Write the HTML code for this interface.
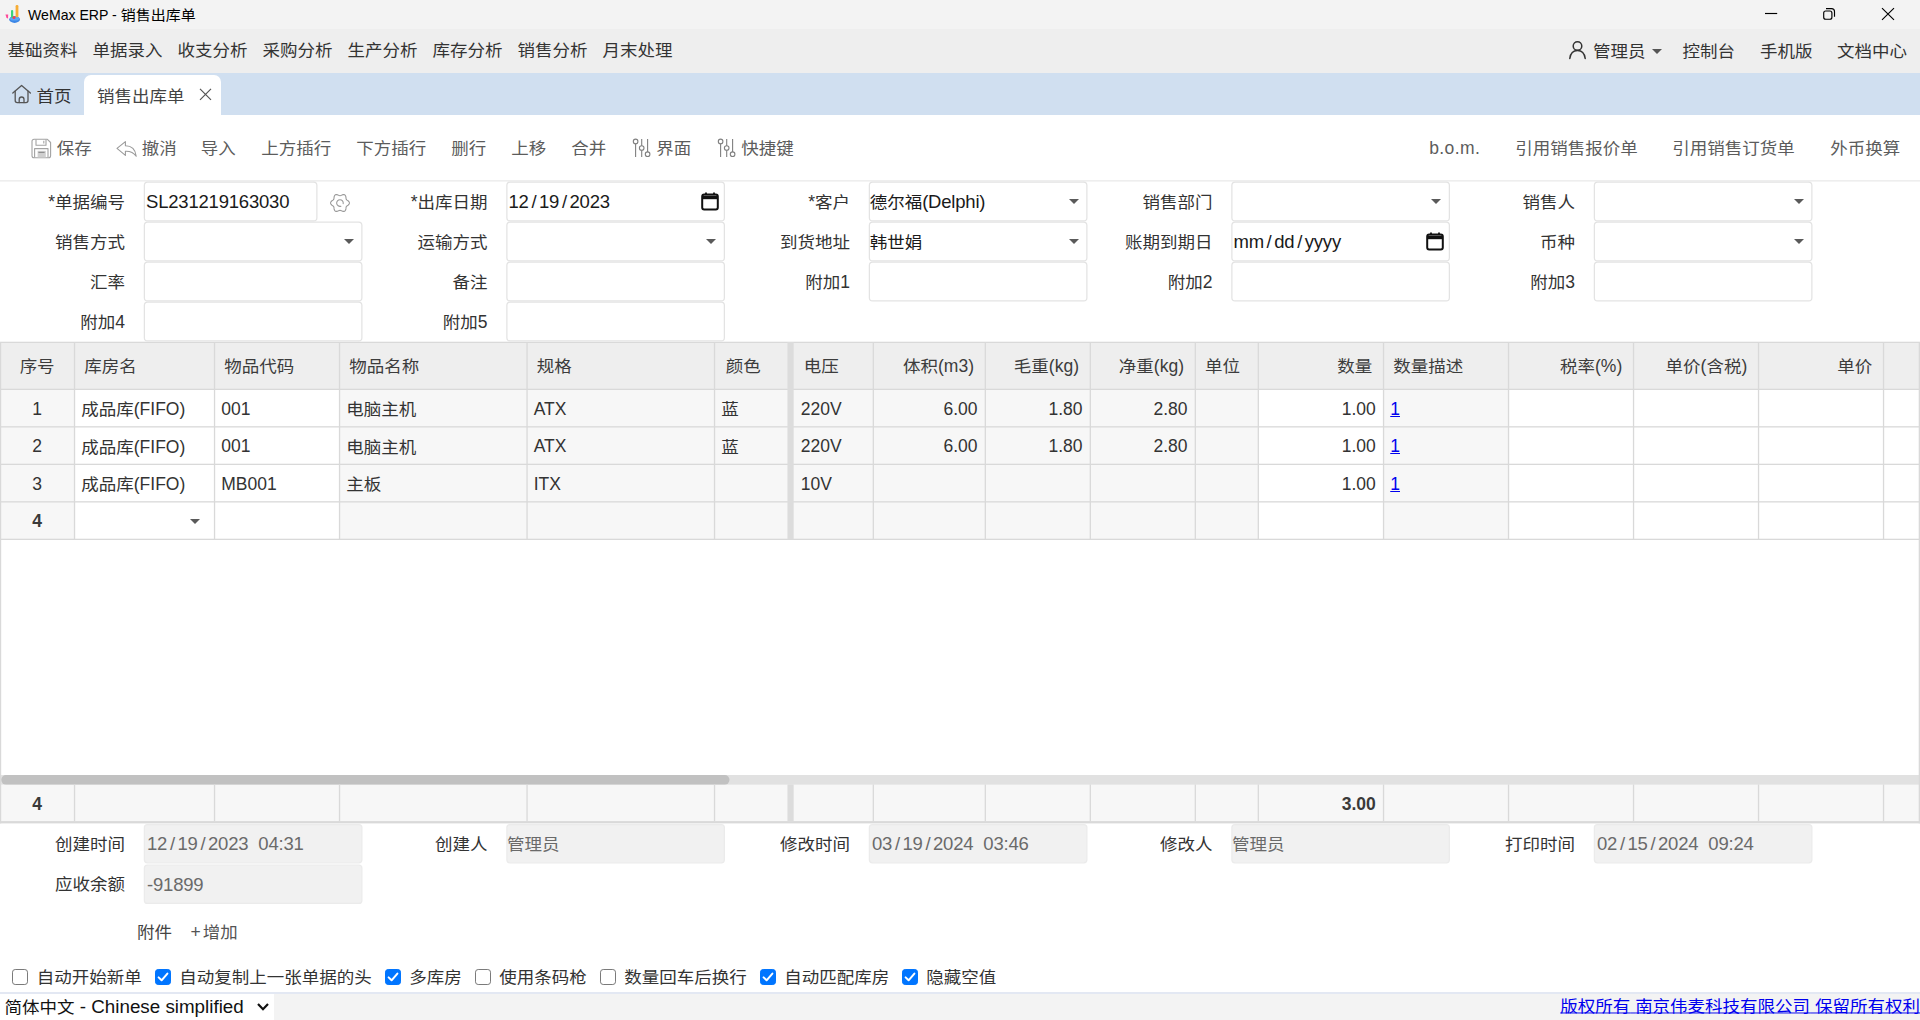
<!DOCTYPE html><html lang="zh-CN"><head><meta charset="utf-8"><title>WeMax ERP - 销售出库单</title><style>
*{box-sizing:border-box;margin:0;padding:0}
html,body{width:1920px;height:1020px;overflow:hidden;background:#fff}
body{position:relative;font-family:"Liberation Sans","Noto Sans CJK SC",sans-serif;font-size:17.5px;color:#333}
.a{position:absolute;white-space:nowrap}
.t{position:absolute;white-space:nowrap;height:24px;line-height:24px}
.k{display:inline-block;transform:scaleY(.93)}
.r{text-align:right}
.c{text-align:center}
#titlebar{left:0;top:0;width:1920px;height:29px;background:#f3f3f3}
#menubar{left:0;top:29px;width:1920px;height:44px;background:#eeeeee}
#tabbar{left:0;top:73px;width:1920px;height:42px;background:#d0dff0}
#tab{left:84px;top:75px;width:137px;height:40px;background:#fff;border-radius:7px 7px 0 0}
.title{font-size:15px;color:#000}
.tb{color:#5c5c5c}
.lbl{color:#333}
.inp{position:absolute;height:40px;font-size:18.5px;letter-spacing:-0.2px;line-height:40px;color:#1a1a1a;white-space:nowrap}
.cj{font-size:17.5px;letter-spacing:0;position:relative;top:0.5px}
.sl{padding:0 2.7px}
.sp{padding-left:5px}
.inp.dis{color:#6a6a6a}
.caret{position:absolute;width:0;height:0;border-left:5.5px solid transparent;border-right:5.5px solid transparent;border-top:5.6px solid #5a5a5a}
.cell{position:absolute;white-space:nowrap;height:24px;line-height:24px;font-size:17.5px;color:#333}
.hd{position:absolute;white-space:nowrap;height:24px;line-height:24px;font-size:17.5px;color:#3c3c3c}
.cb{position:absolute;width:16px;height:16px;border:1.4px solid #7a7a7a;border-radius:3.2px;background:#fff}
.cb.on{background:#0075ff;border-color:#0075ff}
a{color:#0000ee}
a.sq{display:inline-block;transform:scaleY(.93)}
a.sq .k{display:inline;transform:none}
</style></head><body>
<div class="a" id="titlebar"></div>
<svg class="a" style="left:4px;top:3px" width="18" height="21" viewBox="0 0 18 21">
<ellipse cx="10.6" cy="16.4" rx="5.4" ry="3.5" fill="#3c86e6"/>
<ellipse cx="10.6" cy="15.4" rx="4.6" ry="2.2" fill="#5aa6f6"/>
<rect x="11.6" y="2" width="2.8" height="12.2" rx="1.2" fill="#f7ad35"/>
<rect x="7" y="7" width="2.2" height="8" rx="1" fill="#3ad47a"/>
<path d="M1.5 11.4 L4.2 11.6 L4 15.8 L2.4 14.6 Z" fill="#ff4a9a"/>
<circle cx="10" cy="14.6" r="1.5" fill="#e8455c"/>
</svg>
<div class="t title" style="left:28px;top:2.5999999999999996px;"><span style="font-size:14.1px">WeMax ERP - </span><span style="position:relative;top:0.6px"><span class="k">销售出库单</span></span></div>
<svg class="a" style="left:1760px;top:0" width="160" height="29" viewBox="0 0 160 29" fill="none" stroke="#000" stroke-width="1.15">
<path d="M5 13.5 H17.2"/>
<rect x="63.7" y="11" width="8.2" height="8.2" rx="2"/>
<path d="M66 8.6 H71.5 a3 3 0 0 1 3 3 V16.8"/>
<path d="M122 8.2 L134 19.8 M134 8.2 L122 19.8"/>
</svg>
<div class="a" id="menubar"></div>
<div class="t " style="left:7.4px;top:38.35px;"><span class="k">基础资料</span></div>
<div class="t " style="left:92.4px;top:38.35px;"><span class="k">单据录入</span></div>
<div class="t " style="left:177.4px;top:38.35px;"><span class="k">收支分析</span></div>
<div class="t " style="left:262.4px;top:38.35px;"><span class="k">采购分析</span></div>
<div class="t " style="left:347.4px;top:38.35px;"><span class="k">生产分析</span></div>
<div class="t " style="left:432.4px;top:38.35px;"><span class="k">库存分析</span></div>
<div class="t " style="left:517.4px;top:38.35px;"><span class="k">销售分析</span></div>
<div class="t " style="left:602.4px;top:38.35px;"><span class="k">月末处理</span></div>
<svg class="a" style="left:1567px;top:39px" width="21" height="22" viewBox="0 0 21 22" fill="none" stroke="#333" stroke-width="1.5" stroke-linecap="round">
<circle cx="10.5" cy="7" r="4.3"/>
<path d="M2.8 19.5 C3.5 14.5 6.5 11.6 10.5 11.6 C14.5 11.6 17.5 14.5 18.2 19.5"/>
</svg>
<div class="t " style="left:1593px;top:38.6px;"><span class="k">管理员</span></div>
<div class="caret" style="left:1652px;top:49px;border-top-color:#555"></div>
<div class="t " style="left:1682.5px;top:38.6px;"><span class="k">控制台</span></div>
<div class="t " style="left:1760px;top:38.6px;"><span class="k">手机版</span></div>
<div class="t " style="left:1837px;top:38.6px;"><span class="k">文档中心</span></div>
<div class="a" id="tabbar"></div>
<div class="a" id="tab"></div>
<svg class="a" style="left:11px;top:83px" width="22" height="22" viewBox="0 0 22 22" fill="none" stroke="#555" stroke-width="1.3" stroke-linejoin="round" stroke-linecap="round">
<path d="M1.8 10 L10.6 2.4 L19.4 10"/>
<path d="M4.2 8.2 V17.6 a2 2 0 0 0 2 2 H15 a2 2 0 0 0 2 -2 V8.2"/>
<path d="M8.2 19.6 V16.4 a2.4 2.4 0 0 1 4.8 0 V19.6"/>
</svg>
<div class="t " style="left:36.5px;top:83.5px;"><span class="k">首页</span></div>
<div class="t " style="left:97px;top:83.5px;color:#444"><span class="k">销售出库单</span></div>
<svg class="a" style="left:198px;top:87px" width="15" height="15" viewBox="0 0 15 15" stroke="#555" stroke-width="1.2" fill="none"><path d="M2 1.8 L13 12.8 M13 1.8 L2 12.8"/></svg>
<svg class="a" style="left:31px;top:138.4px" width="21" height="21" viewBox="0 0 21 21" fill="none" stroke="#a3a3a3" stroke-width="1.1" stroke-linejoin="round">
<path d="M3 1.3 H16.4 L19.6 4.5 V17.8 a2 2 0 0 1 -2 2 H3 a2 2 0 0 1 -2 -2 V3.3 a2 2 0 0 1 2 -2 Z"/>
<path d="M5 1.5 V7.2 H15 V1.5"/>
<path d="M12.8 2.8 V5.6"/>
<path d="M3.6 19.6 V10.6 H17 V19.6"/>
<rect x="6.6" y="12.8" width="8.2" height="6.6" fill="#cfcfcf" stroke="none"/>
<path d="M7.4 14.4 H13.6" stroke="#8c8c8c"/>
</svg>
<div class="t tb" style="left:56.7px;top:135.65px;"><span class="k">保存</span></div>
<svg class="a" style="left:115px;top:138px" width="23" height="21" viewBox="0 0 23 21" fill="none" stroke="#9a9a9a" stroke-width="1.1" stroke-linejoin="round">
<path d="M2 10.4 L10.4 3.6 V7.8 C16.4 7.8 20.4 11.4 21.2 18.2 C18.6 14.4 15.2 13 10.4 13.2 V17.4 Z"/>
</svg>
<div class="t tb" style="left:141.7px;top:135.65px;"><span class="k">撤消</span></div>
<div class="t tb" style="left:200.7px;top:135.65px;"><span class="k">导入</span></div>
<div class="t tb" style="left:261.2px;top:135.65px;"><span class="k">上方插行</span></div>
<div class="t tb" style="left:356.2px;top:135.65px;"><span class="k">下方插行</span></div>
<div class="t tb" style="left:451.2px;top:135.65px;"><span class="k">删行</span></div>
<div class="t tb" style="left:511.2px;top:135.65px;"><span class="k">上移</span></div>
<div class="t tb" style="left:571.2px;top:135.65px;"><span class="k">合并</span></div>
<svg class="a" style="left:632px;top:137px" width="20" height="22" viewBox="0 0 20 22" fill="#fff" stroke="#808080" stroke-width="1.1">
<path d="M3.6 2 V20 M9.7 2 V20 M15.6 2 V20"/>
<circle cx="3.6" cy="4.4" r="2.3"/><circle cx="9.7" cy="11" r="2.3"/><circle cx="15.6" cy="17.2" r="2.3"/>
</svg>
<div class="t tb" style="left:656.2px;top:135.65px;"><span class="k">界面</span></div>
<svg class="a" style="left:717px;top:137px" width="20" height="22" viewBox="0 0 20 22" fill="#fff" stroke="#808080" stroke-width="1.1">
<path d="M3.6 2 V20 M9.7 2 V20 M15.6 2 V20"/>
<circle cx="3.6" cy="4.4" r="2.3"/><circle cx="9.7" cy="11" r="2.3"/><circle cx="15.6" cy="17.2" r="2.3"/>
</svg>
<div class="t tb" style="left:741.2px;top:135.65px;"><span class="k">快捷键</span></div>
<div class="t tb" style="left:1429.2px;top:135.65px;letter-spacing:0.4px">b.o.m.</div>
<div class="t tb" style="left:1515.2px;top:135.65px;"><span class="k">引用销售报价单</span></div>
<div class="t tb" style="left:1672.2px;top:135.65px;"><span class="k">引用销售订货单</span></div>
<div class="t tb" style="left:1830.2px;top:135.65px;"><span class="k">外币换算</span></div>
<svg class="a" style="left:0;top:0" width="1920" height="1020" viewBox="0 0 1920 1020" shape-rendering="geometricPrecision">
<rect x="0" y="342.0" width="1920" height="47.5" fill="#eeeeee"/>
<rect x="0" y="389.5" width="74.25" height="150.0" fill="#f7f7f7"/>
<rect x="339.25" y="389.5" width="187.5" height="150.0" fill="#f7f7f7"/>
<rect x="526.75" y="389.5" width="187.5" height="150.0" fill="#f7f7f7"/>
<rect x="714.25" y="389.5" width="75.0" height="150.0" fill="#f7f7f7"/>
<rect x="789.25" y="389.5" width="83.75" height="150.0" fill="#f7f7f7"/>
<rect x="873.0" y="389.5" width="112.0" height="150.0" fill="#f7f7f7"/>
<rect x="985.0" y="389.5" width="105.0" height="150.0" fill="#f7f7f7"/>
<rect x="1090.0" y="389.5" width="105.0" height="150.0" fill="#f7f7f7"/>
<rect x="1195.0" y="389.5" width="63.0" height="150.0" fill="#f7f7f7"/>
<rect x="1383.25" y="389.5" width="125.0" height="150.0" fill="#f7f7f7"/>
<rect x="0" y="784.5" width="1920" height="37.0" fill="#f7f7f7"/>
<rect x="0" y="775" width="1920" height="9.7" fill="#e1e1e1"/>
<rect x="1.2" y="775" width="728.3" height="9.6" rx="4.8" fill="#c1c1c1"/>
<rect x="0" y="341.7" width="1920" height="1.3" fill="#d9d9d9"/>
<rect x="0" y="388.7" width="1920" height="1.3" fill="#d9d9d9"/>
<rect x="0" y="426.2" width="1920" height="1.3" fill="#d9d9d9"/>
<rect x="0" y="463.7" width="1920" height="1.3" fill="#d9d9d9"/>
<rect x="0" y="501.2" width="1920" height="1.3" fill="#d9d9d9"/>
<rect x="0" y="538.7" width="1920" height="1.3" fill="#d9d9d9"/>
<rect x="0" y="821.1" width="1920" height="2.3" fill="#d9d9d9"/>
<rect x="73.9" y="342.0" width="1.3" height="197.5" fill="#d9d9d9"/>
<rect x="73.9" y="784.5" width="1.3" height="37.0" fill="#d9d9d9"/>
<rect x="213.9" y="342.0" width="1.3" height="197.5" fill="#d9d9d9"/>
<rect x="213.9" y="784.5" width="1.3" height="37.0" fill="#d9d9d9"/>
<rect x="338.9" y="342.0" width="1.3" height="197.5" fill="#d9d9d9"/>
<rect x="338.9" y="784.5" width="1.3" height="37.0" fill="#d9d9d9"/>
<rect x="526.4" y="342.0" width="1.3" height="197.5" fill="#d9d9d9"/>
<rect x="526.4" y="784.5" width="1.3" height="37.0" fill="#d9d9d9"/>
<rect x="713.9" y="342.0" width="1.3" height="197.5" fill="#d9d9d9"/>
<rect x="713.9" y="784.5" width="1.3" height="37.0" fill="#d9d9d9"/>
<rect x="787.45" y="342.0" width="6.2" height="197.5" fill="#dcdcdc"/>
<rect x="787.45" y="784.5" width="6.2" height="37.0" fill="#dcdcdc"/>
<rect x="872.65" y="342.0" width="1.3" height="197.5" fill="#d9d9d9"/>
<rect x="872.65" y="784.5" width="1.3" height="37.0" fill="#d9d9d9"/>
<rect x="984.65" y="342.0" width="1.3" height="197.5" fill="#d9d9d9"/>
<rect x="984.65" y="784.5" width="1.3" height="37.0" fill="#d9d9d9"/>
<rect x="1089.65" y="342.0" width="1.3" height="197.5" fill="#d9d9d9"/>
<rect x="1089.65" y="784.5" width="1.3" height="37.0" fill="#d9d9d9"/>
<rect x="1194.65" y="342.0" width="1.3" height="197.5" fill="#d9d9d9"/>
<rect x="1194.65" y="784.5" width="1.3" height="37.0" fill="#d9d9d9"/>
<rect x="1257.65" y="342.0" width="1.3" height="197.5" fill="#d9d9d9"/>
<rect x="1257.65" y="784.5" width="1.3" height="37.0" fill="#d9d9d9"/>
<rect x="1382.9" y="342.0" width="1.3" height="197.5" fill="#d9d9d9"/>
<rect x="1382.9" y="784.5" width="1.3" height="37.0" fill="#d9d9d9"/>
<rect x="1507.9" y="342.0" width="1.3" height="197.5" fill="#d9d9d9"/>
<rect x="1507.9" y="784.5" width="1.3" height="37.0" fill="#d9d9d9"/>
<rect x="1632.9" y="342.0" width="1.3" height="197.5" fill="#d9d9d9"/>
<rect x="1632.9" y="784.5" width="1.3" height="37.0" fill="#d9d9d9"/>
<rect x="1757.9" y="342.0" width="1.3" height="197.5" fill="#d9d9d9"/>
<rect x="1757.9" y="784.5" width="1.3" height="37.0" fill="#d9d9d9"/>
<rect x="1882.9" y="342.0" width="1.3" height="197.5" fill="#d9d9d9"/>
<rect x="1882.9" y="784.5" width="1.3" height="37.0" fill="#d9d9d9"/>
<rect x="0" y="342.0" width="1.2" height="481.4" fill="#d9d9d9"/>
<rect x="1918.7" y="342.0" width="1.3" height="481.4" fill="#d9d9d9"/>
<rect x="0" y="180.25" width="1920" height="1.25" fill="#e9e9e9"/>
<rect x="144.375" y="182.125" width="172.5" height="38.75" rx="3.2" fill="#fff" stroke="#e3e3e3" stroke-width="1.25"/>
<rect x="506.875" y="182.125" width="217.5" height="38.75" rx="3.2" fill="#fff" stroke="#e3e3e3" stroke-width="1.25"/>
<rect x="869.375" y="182.125" width="217.5" height="38.75" rx="3.2" fill="#fff" stroke="#e3e3e3" stroke-width="1.25"/>
<rect x="1231.875" y="182.125" width="217.5" height="38.75" rx="3.2" fill="#fff" stroke="#e3e3e3" stroke-width="1.25"/>
<rect x="1594.375" y="182.125" width="217.5" height="38.75" rx="3.2" fill="#fff" stroke="#e3e3e3" stroke-width="1.25"/>
<rect x="144.375" y="222.125" width="217.5" height="38.75" rx="3.2" fill="#fff" stroke="#e3e3e3" stroke-width="1.25"/>
<rect x="506.875" y="222.125" width="217.5" height="38.75" rx="3.2" fill="#fff" stroke="#e3e3e3" stroke-width="1.25"/>
<rect x="869.375" y="222.125" width="217.5" height="38.75" rx="3.2" fill="#fff" stroke="#e3e3e3" stroke-width="1.25"/>
<rect x="1231.875" y="222.125" width="217.5" height="38.75" rx="3.2" fill="#fff" stroke="#e3e3e3" stroke-width="1.25"/>
<rect x="1594.375" y="222.125" width="217.5" height="38.75" rx="3.2" fill="#fff" stroke="#e3e3e3" stroke-width="1.25"/>
<rect x="144.375" y="262.125" width="217.5" height="38.75" rx="3.2" fill="#fff" stroke="#e3e3e3" stroke-width="1.25"/>
<rect x="506.875" y="262.125" width="217.5" height="38.75" rx="3.2" fill="#fff" stroke="#e3e3e3" stroke-width="1.25"/>
<rect x="869.375" y="262.125" width="217.5" height="38.75" rx="3.2" fill="#fff" stroke="#e3e3e3" stroke-width="1.25"/>
<rect x="1231.875" y="262.125" width="217.5" height="38.75" rx="3.2" fill="#fff" stroke="#e3e3e3" stroke-width="1.25"/>
<rect x="1594.375" y="262.125" width="217.5" height="38.75" rx="3.2" fill="#fff" stroke="#e3e3e3" stroke-width="1.25"/>
<rect x="144.375" y="302.125" width="217.5" height="38.75" rx="3.2" fill="#fff" stroke="#e3e3e3" stroke-width="1.25"/>
<rect x="506.875" y="302.125" width="217.5" height="38.75" rx="3.2" fill="#fff" stroke="#e3e3e3" stroke-width="1.25"/>
<rect x="144.375" y="824.525" width="217.5" height="38.25" rx="3" fill="#f1f1f1" stroke="#ebebeb" stroke-width="1.25"/>
<rect x="506.875" y="824.525" width="217.5" height="38.25" rx="3" fill="#f1f1f1" stroke="#ebebeb" stroke-width="1.25"/>
<rect x="869.375" y="824.525" width="217.5" height="38.25" rx="3" fill="#f1f1f1" stroke="#ebebeb" stroke-width="1.25"/>
<rect x="1231.875" y="824.525" width="217.5" height="38.25" rx="3" fill="#f1f1f1" stroke="#ebebeb" stroke-width="1.25"/>
<rect x="1594.375" y="824.525" width="217.5" height="38.25" rx="3" fill="#f1f1f1" stroke="#ebebeb" stroke-width="1.25"/>
<rect x="144.375" y="865.225" width="217.5" height="38.25" rx="3" fill="#f1f1f1" stroke="#ebebeb" stroke-width="1.25"/>
</svg>
<div class="t r lbl" style="right:1795.0px;top:189.5px;">*<span class="k">单据编号</span></div>
<div class="inp " style="left:146.0px;top:181.5px">SL231219163030</div>
<svg class="a" style="left:328px;top:190.7px" width="24" height="24" viewBox="0 0 24 24" fill="none" stroke="#9a9a9a" stroke-width="1.1" stroke-linejoin="round">
<path d="M21.4 12.0 L21.3 12.8 L20.8 13.5 L20.1 14.2 L19.3 14.7 L18.7 15.1 L18.3 15.6 L18.1 16.2 L18.0 17.0 L17.9 17.9 L17.7 18.8 L17.3 19.6 L16.7 20.2 L15.9 20.4 L15.0 20.4 L14.2 20.1 L13.4 19.7 L12.6 19.4 L12.0 19.2 L11.4 19.4 L10.6 19.7 L9.8 20.1 L9.0 20.4 L8.1 20.4 L7.3 20.2 L6.7 19.6 L6.3 18.8 L6.1 17.9 L6.0 17.0 L5.9 16.2 L5.7 15.6 L5.3 15.1 L4.7 14.7 L3.9 14.2 L3.2 13.5 L2.7 12.8 L2.6 12.0 L2.7 11.2 L3.2 10.5 L3.9 9.8 L4.7 9.3 L5.3 8.9 L5.7 8.4 L5.9 7.8 L6.0 7.0 L6.1 6.1 L6.3 5.2 L6.7 4.4 L7.3 3.8 L8.1 3.6 L9.0 3.6 L9.8 3.9 L10.6 4.3 L11.4 4.6 L12.0 4.8 L12.6 4.6 L13.4 4.3 L14.2 3.9 L15.0 3.6 L15.9 3.6 L16.7 3.8 L17.3 4.4 L17.7 5.2 L17.9 6.1 L18.0 7.0 L18.1 7.8 L18.3 8.4 L18.7 8.9 L19.3 9.3 L20.1 9.8 L20.8 10.5 L21.3 11.2 Z"/>
<path d="M15.2 12.6 A3.3 3.3 0 1 0 12.9 15.2" stroke-linecap="round"/>
</svg>
<div class="t r lbl" style="right:1432.5px;top:189.5px;">*<span class="k">出库日期</span></div>
<div class="inp dt" style="left:508.5px;top:181.5px">12<span class="sl">/</span>19<span class="sl">/</span>2023</div>
<svg class="a" style="left:699.5px;top:191.0px" width="20" height="21" viewBox="0 0 20 21" fill="none" stroke="#111" stroke-width="2">
<rect x="2.2" y="3.6" width="15.6" height="15" rx="2"/><path d="M2.2 6.4 H17.8" stroke-width="3.6"/><path d="M6 1.4 V4 M14 1.4 V4" stroke-width="1.8"/></svg>
<div class="t r lbl" style="right:1070.0px;top:189.5px;">*<span class="k">客户</span></div>
<div class="inp " style="left:869.65px;top:181.5px"><span class="cj"><span class="k">德尔福</span></span>(Delphi)</div>
<div class="caret" style="left:1068.5px;top:199.0px"></div>
<div class="t r lbl" style="right:707.5px;top:189.5px;"><span class="k">销售部门</span></div>
<div class="caret" style="left:1431.0px;top:199.0px"></div>
<div class="t r lbl" style="right:345.0px;top:189.5px;"><span class="k">销售人</span></div>
<div class="caret" style="left:1793.5px;top:199.0px"></div>
<div class="t r lbl" style="right:1795.0px;top:229.5px;"><span class="k">销售方式</span></div>
<div class="caret" style="left:343.5px;top:239.0px"></div>
<div class="t r lbl" style="right:1432.5px;top:229.5px;"><span class="k">运输方式</span></div>
<div class="caret" style="left:706.0px;top:239.0px"></div>
<div class="t r lbl" style="right:1070.0px;top:229.5px;"><span class="k">到货地址</span></div>
<div class="inp " style="left:869.65px;top:221.5px"><span class="cj"><span class="k">韩世娟</span></span></div>
<div class="caret" style="left:1068.5px;top:239.0px"></div>
<div class="t r lbl" style="right:707.5px;top:229.5px;"><span class="k">账期到期日</span></div>
<div class="inp dt" style="left:1233.5px;top:221.5px">mm<span class="sl">/</span>dd<span class="sl">/</span>yyyy</div>
<svg class="a" style="left:1424.5px;top:231.0px" width="20" height="21" viewBox="0 0 20 21" fill="none" stroke="#111" stroke-width="2">
<rect x="2.2" y="3.6" width="15.6" height="15" rx="2"/><path d="M2.2 6.4 H17.8" stroke-width="3.6"/><path d="M6 1.4 V4 M14 1.4 V4" stroke-width="1.8"/></svg>
<div class="t r lbl" style="right:345.0px;top:229.5px;"><span class="k">币种</span></div>
<div class="caret" style="left:1793.5px;top:239.0px"></div>
<div class="t r lbl" style="right:1795.0px;top:269.5px;"><span class="k">汇率</span></div>
<div class="t r lbl" style="right:1432.5px;top:269.5px;"><span class="k">备注</span></div>
<div class="t r lbl" style="right:1070.0px;top:269.5px;"><span class="k">附加</span>1</div>
<div class="t r lbl" style="right:707.5px;top:269.5px;"><span class="k">附加</span>2</div>
<div class="t r lbl" style="right:345.0px;top:269.5px;"><span class="k">附加</span>3</div>
<div class="t r lbl" style="right:1795.0px;top:309.5px;"><span class="k">附加</span>4</div>
<div class="t r lbl" style="right:1432.5px;top:309.5px;"><span class="k">附加</span>5</div>
<div class="hd c" style="left:0px;width:74.25px;top:354.35px;"><span class="k">序号</span></div>
<div class="hd" style="left:84.25px;top:354.35px;"><span class="k">库房名</span></div>
<div class="hd" style="left:224.25px;top:354.35px;"><span class="k">物品代码</span></div>
<div class="hd" style="left:349.25px;top:354.35px;"><span class="k">物品名称</span></div>
<div class="hd" style="left:536.75px;top:354.35px;"><span class="k">规格</span></div>
<div class="hd" style="left:725.75px;top:354.35px;"><span class="k">颜色</span></div>
<div class="hd" style="left:803.75px;top:354.35px;"><span class="k">电压</span></div>
<div class="hd r" style="right:946.0px;top:354.35px;"><span class="k">体积</span>(m3)</div>
<div class="hd r" style="right:841.0px;top:354.35px;"><span class="k">毛重</span>(kg)</div>
<div class="hd r" style="right:736.0px;top:354.35px;"><span class="k">净重</span>(kg)</div>
<div class="hd" style="left:1205.0px;top:354.35px;"><span class="k">单位</span></div>
<div class="hd r" style="right:547.75px;top:354.35px;"><span class="k">数量</span></div>
<div class="hd" style="left:1393.25px;top:354.35px;"><span class="k">数量描述</span></div>
<div class="hd r" style="right:297.75px;top:354.35px;"><span class="k">税率</span>(%)</div>
<div class="hd r" style="right:172.75px;top:354.35px;"><span class="k">单价</span>(<span class="k">含税</span>)</div>
<div class="hd r" style="right:47.75px;top:354.35px;"><span class="k">单价</span></div>
<div class="cell c" style="left:0px;width:74.25px;top:396.75px;">1</div>
<div class="cell" style="left:81.25px;top:397.05px;"><span class="k">成品库</span>(FIFO)</div>
<div class="cell" style="left:221.25px;top:396.75px;">001</div>
<div class="cell" style="left:346.25px;top:397.05px;"><span class="k">电脑主机</span></div>
<div class="cell" style="left:533.75px;top:396.75px;">ATX</div>
<div class="cell" style="left:721.25px;top:397.05px;"><span class="k">蓝</span></div>
<div class="cell" style="left:800.75px;top:396.75px;">220V</div>
<div class="cell r" style="right:942.5px;top:396.75px;">6.00</div>
<div class="cell r" style="right:837.5px;top:396.75px;">1.80</div>
<div class="cell r" style="right:732.5px;top:396.75px;">2.80</div>
<div class="cell r" style="right:544.25px;top:396.75px;">1.00</div>
<div class="cell" style="left:1390.25px;top:396.75px;"><a href="#">1</a></div>
<div class="cell c" style="left:0px;width:74.25px;top:434.25px;">2</div>
<div class="cell" style="left:81.25px;top:434.55px;"><span class="k">成品库</span>(FIFO)</div>
<div class="cell" style="left:221.25px;top:434.25px;">001</div>
<div class="cell" style="left:346.25px;top:434.55px;"><span class="k">电脑主机</span></div>
<div class="cell" style="left:533.75px;top:434.25px;">ATX</div>
<div class="cell" style="left:721.25px;top:434.55px;"><span class="k">蓝</span></div>
<div class="cell" style="left:800.75px;top:434.25px;">220V</div>
<div class="cell r" style="right:942.5px;top:434.25px;">6.00</div>
<div class="cell r" style="right:837.5px;top:434.25px;">1.80</div>
<div class="cell r" style="right:732.5px;top:434.25px;">2.80</div>
<div class="cell r" style="right:544.25px;top:434.25px;">1.00</div>
<div class="cell" style="left:1390.25px;top:434.25px;"><a href="#">1</a></div>
<div class="cell c" style="left:0px;width:74.25px;top:471.75px;">3</div>
<div class="cell" style="left:81.25px;top:472.05px;"><span class="k">成品库</span>(FIFO)</div>
<div class="cell" style="left:221.25px;top:471.75px;">MB001</div>
<div class="cell" style="left:346.25px;top:472.05px;"><span class="k">主板</span></div>
<div class="cell" style="left:533.75px;top:471.75px;">ITX</div>
<div class="cell" style="left:800.75px;top:471.75px;">10V</div>
<div class="cell r" style="right:544.25px;top:471.75px;">1.00</div>
<div class="cell" style="left:1390.25px;top:471.75px;"><a href="#">1</a></div>
<div class="cell c" style="left:0px;width:74.25px;top:509.25px;font-weight:bold;color:#3a3a3a">4</div>
<div class="caret" style="left:189.5px;top:518.75px;border-left-width:5px;border-right-width:5px;border-top-width:5.5px"></div>
<div class="cell c" style="left:0px;width:74.25px;top:791.5px;font-weight:bold;color:#3a3a3a">4</div>
<div class="cell r" style="right:544.25px;top:791.5px;font-weight:bold;color:#3a3a3a">3.00</div>
<div class="t r lbl" style="right:1795.0px;top:831.6px;"><span class="k">创建时间</span></div>
<div class="inp dis" style="left:147.0px;top:823.9px;height:39.5px;line-height:39.5px">12<span class="sl">/</span>19<span class="sl">/</span>2023<span class="sp"> </span>04:31</div>
<div class="t r lbl" style="right:1432.5px;top:831.6px;"><span class="k">创建人</span></div>
<div class="inp dis" style="left:507.1px;top:823.9px;height:39.5px;line-height:39.5px"><span class="cj"><span class="k">管理员</span></span></div>
<div class="t r lbl" style="right:1070.0px;top:831.6px;"><span class="k">修改时间</span></div>
<div class="inp dis" style="left:872.0px;top:823.9px;height:39.5px;line-height:39.5px">03<span class="sl">/</span>19<span class="sl">/</span>2024<span class="sp"> </span>03:46</div>
<div class="t r lbl" style="right:707.5px;top:831.6px;"><span class="k">修改人</span></div>
<div class="inp dis" style="left:1232.1px;top:823.9px;height:39.5px;line-height:39.5px"><span class="cj"><span class="k">管理员</span></span></div>
<div class="t r lbl" style="right:345.0px;top:831.6px;"><span class="k">打印时间</span></div>
<div class="inp dis" style="left:1597.0px;top:823.9px;height:39.5px;line-height:39.5px">02<span class="sl">/</span>15<span class="sl">/</span>2024<span class="sp"> </span>09:24</div>
<div class="t r lbl" style="right:1795.0px;top:872.1px;"><span class="k">应收余额</span></div>
<div class="inp dis" style="left:147.0px;top:864.6px;height:39.5px;line-height:39.5px">-91899</div>
<div class="t " style="left:137px;top:920px;color:#444"><span class="k">附件</span></div>
<div class="t " style="left:190.5px;top:920px;color:#555"><span style="letter-spacing:2px">+</span><span class="k">增加</span></div>
<div class="cb" style="left:12px;top:968.6px"></div>
<div class="t " style="left:36.7px;top:965px;"><span class="k">自动开始新单</span></div>
<div class="cb on" style="left:155px;top:968.6px"></div>
<svg class="a" style="left:155px;top:968.6px" width="16" height="16" viewBox="0 0 16 16" fill="none" stroke="#fff" stroke-width="2" stroke-linecap="round" stroke-linejoin="round"><path d="M3.6 8.4 L6.6 11.3 L12.4 4.6"/></svg>
<div class="t " style="left:179.2px;top:965px;"><span class="k">自动复制上一张单据的头</span></div>
<div class="cb on" style="left:385px;top:968.6px"></div>
<svg class="a" style="left:385px;top:968.6px" width="16" height="16" viewBox="0 0 16 16" fill="none" stroke="#fff" stroke-width="2" stroke-linecap="round" stroke-linejoin="round"><path d="M3.6 8.4 L6.6 11.3 L12.4 4.6"/></svg>
<div class="t " style="left:409.2px;top:965px;"><span class="k">多库房</span></div>
<div class="cb" style="left:475px;top:968.6px"></div>
<div class="t " style="left:499.2px;top:965px;"><span class="k">使用条码枪</span></div>
<div class="cb" style="left:600px;top:968.6px"></div>
<div class="t " style="left:624.2px;top:965px;"><span class="k">数量回车后换行</span></div>
<div class="cb on" style="left:760px;top:968.6px"></div>
<svg class="a" style="left:760px;top:968.6px" width="16" height="16" viewBox="0 0 16 16" fill="none" stroke="#fff" stroke-width="2" stroke-linecap="round" stroke-linejoin="round"><path d="M3.6 8.4 L6.6 11.3 L12.4 4.6"/></svg>
<div class="t " style="left:784.2px;top:965px;"><span class="k">自动匹配库房</span></div>
<div class="cb on" style="left:902px;top:968.6px"></div>
<svg class="a" style="left:902px;top:968.6px" width="16" height="16" viewBox="0 0 16 16" fill="none" stroke="#fff" stroke-width="2" stroke-linecap="round" stroke-linejoin="round"><path d="M3.6 8.4 L6.6 11.3 L12.4 4.6"/></svg>
<div class="t " style="left:926.2px;top:965px;"><span class="k">隐藏空值</span></div>
<div class="a" style="left:0;top:992px;width:1920px;height:28px;background:#f3f3f3;border-top:2px solid #e3e8f3"></div>
<div class="a" style="left:0;top:994px;width:273.5px;height:26px;background:#fff"></div>
<div class="t " style="left:4.6px;top:995px;font-size:17.5px;color:#111"><span class="k">简体中文</span><span style="font-size:18.8px"> - Chinese simplified</span></div>
<svg class="a" style="left:256px;top:1001px" width="14" height="12" viewBox="0 0 14 12" fill="none" stroke="#111" stroke-width="2.2"><path d="M2 3 L7 8.2 L12 3"/></svg>
<div class="t r " style="right:0px;top:994.4px;"><a class="sq" href="#"><span class="k">版权所有</span> <span class="k">南京伟麦科技有限公司</span> <span class="k">保留所有权利</span></a></div>
</body></html>
